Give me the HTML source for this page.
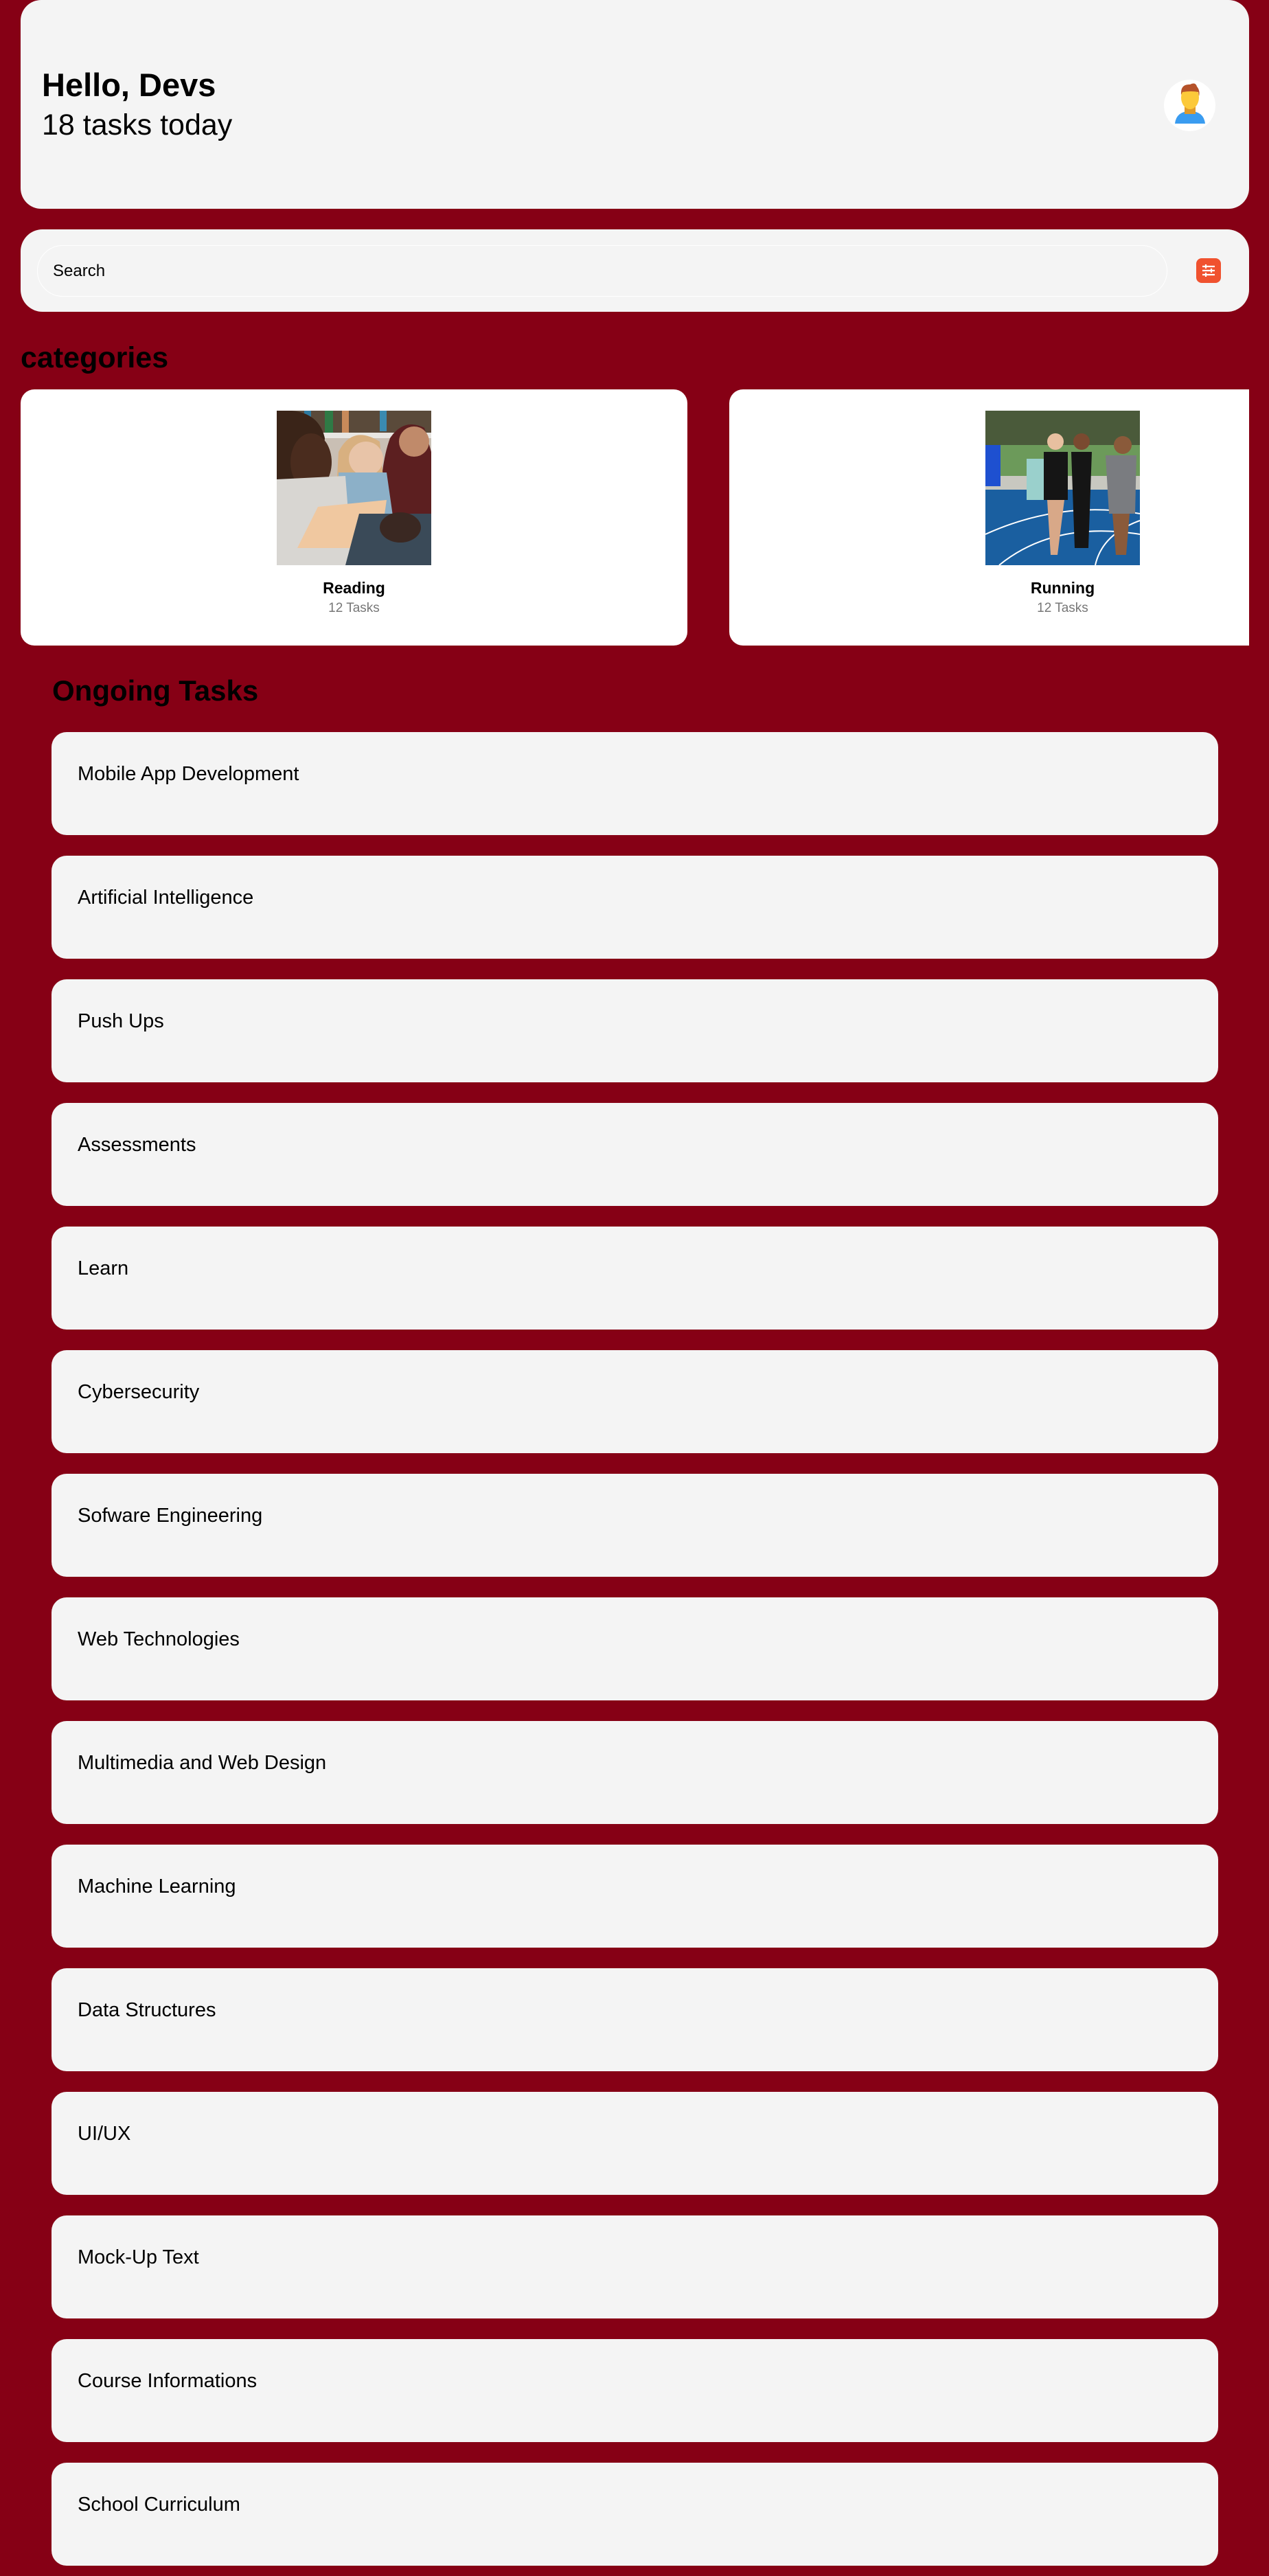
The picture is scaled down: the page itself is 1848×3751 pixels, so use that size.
<!DOCTYPE html>
<html><head><meta charset="utf-8"><style>
*{margin:0;padding:0;box-sizing:border-box}
body{width:1848px;height:3751px;background:#860015;font-family:"Liberation Sans",sans-serif;position:relative;overflow:hidden;color:#000}
.abs{position:absolute}
.hdr{left:30px;top:0;width:1789px;height:304px;background:#f4f4f4;border-radius:30px}
.t{position:absolute;white-space:nowrap;line-height:1}
.srch{left:30px;top:334px;width:1789px;height:120px;background:#f4f4f4;border-radius:32px}
.inp{left:54px;top:357px;width:1646px;height:75px;border:1px solid #fff;border-radius:38px}
.card{top:567px;width:971px;height:373px;background:#fff;border-radius:20px}
.task{left:75px;width:1699px;height:150px;background:#f4f4f4;border-radius:22px}
.task span{position:absolute;left:38px;top:47px;font-size:29px;line-height:1;white-space:nowrap}
</style></head><body>
<div class="abs hdr"></div>
<div class="t" style="left:61px;top:100px;font-size:47px;font-weight:bold">Hello, Devs</div>
<div class="t" style="left:61px;top:161px;font-size:43px">18 tasks today</div>
<div class="abs" style="left:1695px;top:116px;width:75px;height:75px;border-radius:50%;background:#fff"></div>
<svg class="abs" style="left:1705px;top:118px" width="56" height="70" viewBox="0 0 56 70">
<path d="M6 62 Q8 44 28 44 Q48 44 50 62 Z" fill="#3a9cf0"/>
<rect x="20" y="36" width="16" height="12" fill="#e09a2a"/>
<ellipse cx="28" cy="24" rx="13" ry="17" fill="#fcc93a"/>
<path d="M15 20 Q14 4 28 5 Q36 1 38 8 Q43 14 41 22 L40 16 Q30 14 17 16 Z" fill="#b5522a"/>
</svg>
<div class="abs srch"></div>
<div class="abs inp"></div>
<div class="t" style="left:77px;top:383px;font-size:24px">Search</div>
<div class="abs" style="left:1742px;top:376px;width:36px;height:36px;background:#f0522f;border-radius:8px"></div>
<svg class="abs" style="left:1742px;top:376px" width="36" height="36" viewBox="0 0 36 36" stroke="#fff" stroke-width="2.2">
<path d="M9 12H27M9 18H27M9 24H27"/><path d="M14 9V15M22 15V21M14 21V27"/>
</svg>
<div class="t" style="left:30px;top:500px;font-size:43px;font-weight:bold">categories</div>
<div class="abs card" style="left:30px"></div>
<div class="abs card" style="left:1062px;width:757px;border-radius:20px 0 0 20px"></div>
<svg class="abs" style="left:403px;top:598px" width="225" height="225" viewBox="0 0 225 225">
<rect width="225" height="225" fill="#c9bfb4"/>
<rect width="225" height="40" fill="#5a4a3a"/>
<rect x="40" y="0" width="10" height="32" fill="#2e7aa0"/><rect x="70" y="0" width="12" height="32" fill="#2f7a45"/><rect x="95" y="0" width="10" height="32" fill="#c88a5a"/><rect x="150" y="0" width="10" height="30" fill="#3a8ab0"/>
<rect y="32" width="225" height="8" fill="#e8e6e2"/>
<path d="M165 40 Q185 10 215 25 L225 60 L225 160 L150 160 Q150 80 165 40Z" fill="#5c1f20"/>
<circle cx="200" cy="45" r="22" fill="#c08a6a"/>
<path d="M90 60 Q110 20 150 45 L160 150 L85 150 Z" fill="#d8b080"/>
<circle cx="130" cy="70" r="25" fill="#e8c4a8"/>
<path d="M90 90 L160 90 L170 160 L90 160Z" fill="#8cb0c8"/>
<path d="M0 0 Q60 -5 70 40 L65 110 Q40 125 0 110Z" fill="#3a2418"/>
<ellipse cx="50" cy="75" rx="30" ry="42" fill="#4a2c1e"/>
<path d="M0 100 L100 95 L110 225 L0 225Z" fill="#d8d6d2"/>
<path d="M30 200 L60 140 L160 130 L150 200Z" fill="#f0c8a0"/>
<path d="M120 150 L225 150 L225 225 L100 225Z" fill="#3a4a58"/>
<ellipse cx="180" cy="170" rx="30" ry="22" fill="#3a2822"/>
</svg>
<svg class="abs" style="left:1435px;top:598px" width="225" height="225" viewBox="0 0 225 225">
<rect width="225" height="225" fill="#1a5fa0"/>
<rect width="225" height="60" fill="#4a5a3a"/>
<rect y="50" width="225" height="60" fill="#6c9a5a"/>
<rect y="95" width="225" height="20" fill="#c8c8c0"/>
<path d="M0 180 Q110 130 225 150 M20 225 Q100 160 225 180 M160 225 Q170 180 225 160" stroke="#fff" stroke-width="2" fill="none"/>
<rect x="0" y="50" width="22" height="60" fill="#1e50d0"/>
<path d="M60 70 L85 70 L85 130 L60 130Z" fill="#9ad0cc"/>
<path d="M85 60 L120 60 L120 130 L85 130Z" fill="#151515"/>
<circle cx="102" cy="45" r="12" fill="#e8c0a0"/>
<path d="M125 60 L155 60 L150 200 L130 200Z" fill="#151515"/>
<circle cx="140" cy="45" r="12" fill="#7a4a30"/>
<path d="M175 65 L220 65 L218 150 L180 150Z" fill="#7a7c80"/>
<circle cx="200" cy="50" r="13" fill="#8a5a3a"/>
<path d="M90 130 L115 130 L105 210 L95 210Z" fill="#d8a888"/>
<path d="M185 150 L210 150 L205 210 L190 210Z" fill="#8a5a3a"/>
</svg>
<div class="t" style="left:30px;width:971px;text-align:center;top:845px;font-size:23px;font-weight:bold">Reading</div>
<div class="t" style="left:30px;width:971px;text-align:center;top:876px;font-size:19px;color:#777">12 Tasks</div>
<div class="t" style="left:1062px;width:971px;text-align:center;top:845px;font-size:23px;font-weight:bold">Running</div>
<div class="t" style="left:1062px;width:971px;text-align:center;top:876px;font-size:19px;color:#777">12 Tasks</div>
<div class="t" style="left:76px;top:985px;font-size:42px;font-weight:bold">Ongoing Tasks</div>
<div class="abs task" style="top:1066px"><span>Mobile App Development</span></div>
<div class="abs task" style="top:1246px"><span>Artificial Intelligence</span></div>
<div class="abs task" style="top:1426px"><span>Push Ups</span></div>
<div class="abs task" style="top:1606px"><span>Assessments</span></div>
<div class="abs task" style="top:1786px"><span>Learn</span></div>
<div class="abs task" style="top:1966px"><span>Cybersecurity</span></div>
<div class="abs task" style="top:2146px"><span>Sofware Engineering</span></div>
<div class="abs task" style="top:2326px"><span>Web Technologies</span></div>
<div class="abs task" style="top:2506px"><span>Multimedia and Web Design</span></div>
<div class="abs task" style="top:2686px"><span>Machine Learning</span></div>
<div class="abs task" style="top:2866px"><span>Data Structures</span></div>
<div class="abs task" style="top:3046px"><span>UI/UX</span></div>
<div class="abs task" style="top:3226px"><span>Mock-Up Text</span></div>
<div class="abs task" style="top:3406px"><span>Course Informations</span></div>
<div class="abs task" style="top:3586px"><span>School Curriculum</span></div>
</body></html>
